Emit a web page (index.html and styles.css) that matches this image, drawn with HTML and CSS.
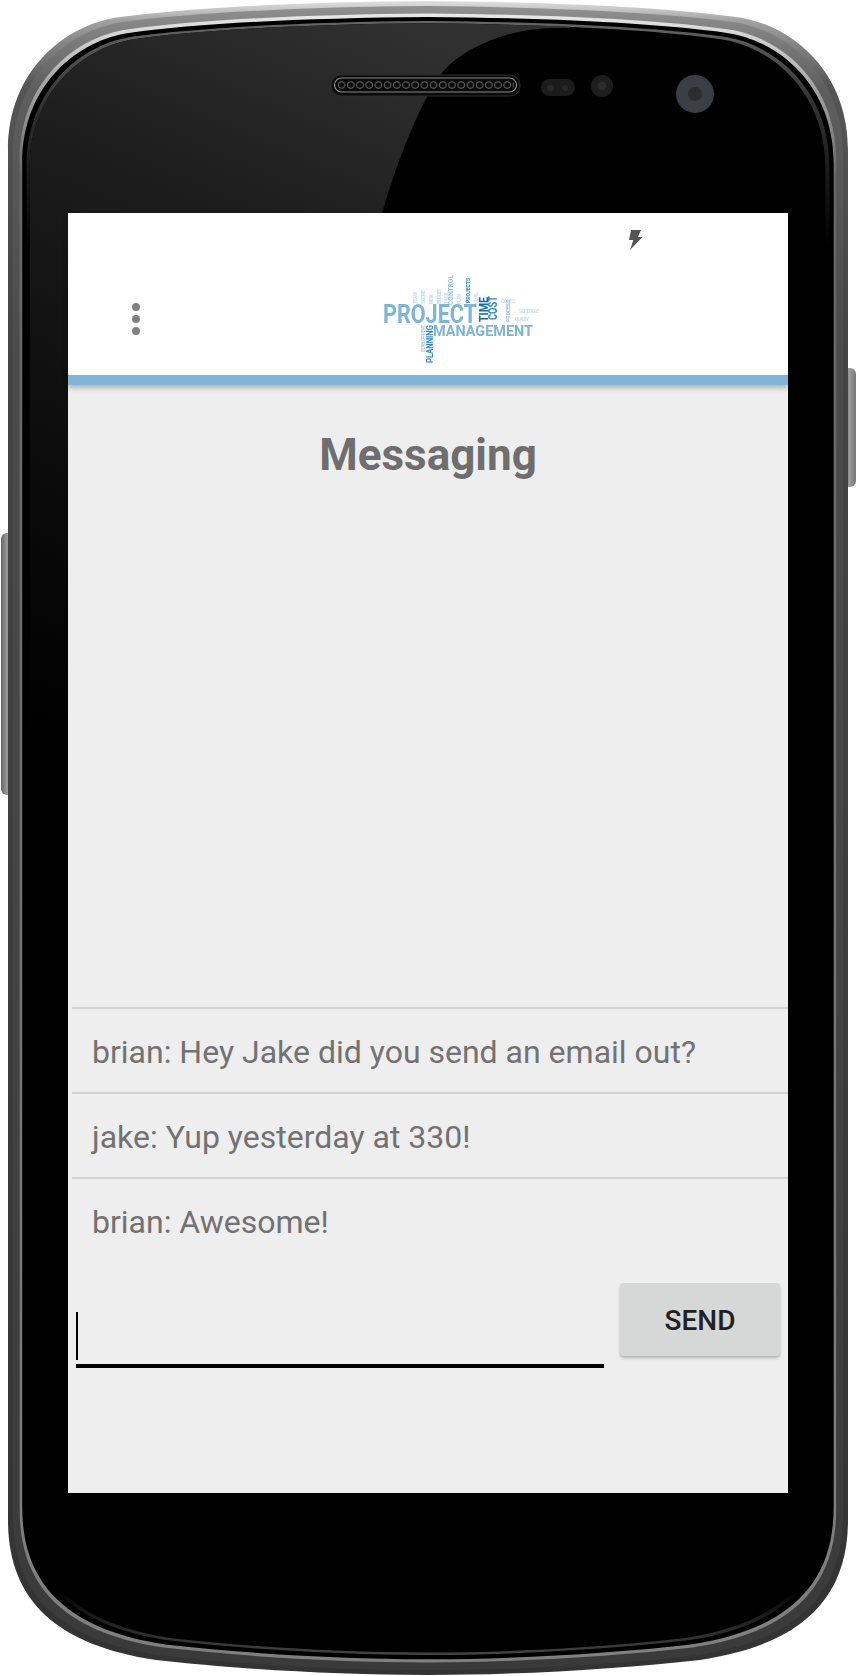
FILE: index.html
```html
<!DOCTYPE html>
<html lang="en">

<head>
    <meta charset="UTF-8">
    <meta name="viewport" content="width=device-width, initial-scale=1.0">
    <title>Messaging</title>
    <link rel="stylesheet" href="styles.css">
</head>

<body>
    <div class="phone">
        <!-- device frame, drawn behind the screen -->
        <svg class="frame" width="856" height="1676" viewBox="0 0 856 1676">
            <defs>
                <path id="body" d="M428 1C560 2 670 8 736 17C790 24 848 70 848 150V1520C848 1600 800 1645 700 1660C620 1669 520 1675 428 1675C336 1675 236 1669 156 1660C56 1645 8 1600 8 1520V150C8 70 66 24 120 17C186 8 296 2 428 1Z"/>
                <linearGradient id="rimOuter" x1="0" y1="0" x2="0" y2="1">
                    <stop offset="0" stop-color="#e0e0e0"/>
                    <stop offset="0.012" stop-color="#a0a0a0"/>
                    <stop offset="0.05" stop-color="#555"/>
                    <stop offset="0.2" stop-color="#454545"/>
                    <stop offset="1" stop-color="#333"/>
                </linearGradient>
                <linearGradient id="rimMid" x1="0" y1="0" x2="0" y2="1">
                    <stop offset="0" stop-color="#909090"/>
                    <stop offset="0.05" stop-color="#5e5e5e"/>
                    <stop offset="0.2" stop-color="#4c4c4c"/>
                    <stop offset="1" stop-color="#3a3a3a"/>
                </linearGradient>
                <linearGradient id="rimLight" x1="0" y1="0" x2="0" y2="1">
                    <stop offset="0" stop-color="#e8e8e8"/>
                    <stop offset="0.04" stop-color="#aaa"/>
                    <stop offset="0.1" stop-color="#666"/>
                    <stop offset="1" stop-color="#808080"/>
                </linearGradient>
                <linearGradient id="rimLine" x1="0" y1="0" x2="0" y2="1">
                    <stop offset="0" stop-color="#666"/>
                    <stop offset="0.05" stop-color="#333"/>
                    <stop offset="0.14" stop-color="#000"/>
                    <stop offset="0.96" stop-color="#000"/>
                    <stop offset="1" stop-color="#444"/>
                </linearGradient>
                <linearGradient id="glass" gradientUnits="userSpaceOnUse" x1="380" y1="20" x2="60" y2="760">
                    <stop offset="0" stop-color="#303030"/>
                    <stop offset="0.3" stop-color="#1c1c1c"/>
                    <stop offset="0.7" stop-color="#0a0a0a"/>
                    <stop offset="1" stop-color="#000"/>
                </linearGradient>
                <linearGradient id="keyLeft" x1="0" y1="0" x2="1" y2="0">
                    <stop offset="0" stop-color="#666"/>
                    <stop offset="0.5" stop-color="#9a9a9a"/>
                    <stop offset="1" stop-color="#777"/>
                </linearGradient>
                <pattern id="holes" x="337" y="80" width="9.2" height="10" patternUnits="userSpaceOnUse">
                    <circle cx="4.6" cy="5" r="3.300" fill="#0c0c0c" stroke="#666" stroke-width="1"/>
                </pattern>
                <clipPath id="inner">
                    <use href="#body" transform="translate(22.2 22.4) scale(.9472 .9732)"/>
                </clipPath>
            </defs>

            <rect class="key" x="1" y="533" width="12" height="262" rx="6" fill="url(#keyLeft)"/>
            <rect class="key" x="843" y="368" width="13" height="119" rx="6" fill="url(#keyLeft)"/>

            <use href="#body" fill="url(#rimOuter)"/>
            <use href="#body" fill="url(#rimMid)" transform="translate(5.1 5.1) scale(.988 .994)"/>
            <use href="#body" fill="url(#rimLight)" transform="translate(11.9 12.5) scale(.972 .985)"/>
            <use href="#body" fill="#000" transform="translate(14.5 16) scale(.966 .981)"/>
            <use href="#body" fill="url(#rimLine)" transform="translate(19 20) scale(.9556 .9761)"/>
            <use href="#body" fill="#000" transform="translate(22.2 22.4) scale(.9472 .9732)"/>
            <g clip-path="url(#inner)">
                <path fill="url(#glass)" d="M0 0H570V28C530 27 505 32 470 50C450 62 440 72 428 95C412 125 396 165 382 213L68 213V800H0Z"/>
            </g>

            <!-- speaker -->
            <rect x="331" y="75" width="189" height="21" rx="10" fill="#0b0b0b" stroke="#2c2c2c" stroke-width="1"/>
            <rect x="334.500" y="78" width="182" height="14" rx="7" fill="#0a0a0a" stroke="#8a8a8a" stroke-width="1.200"/>
            <rect x="337" y="80" width="177" height="10" fill="url(#holes)"/>

            <!-- sensors and camera -->
            <rect x="541" y="79" width="34" height="17" rx="8.500" fill="#1c1c1c"/>
            <circle cx="550" cy="88" r="3" fill="#2b2b2b"/>
            <circle cx="565" cy="88" r="3" fill="#2b2b2b"/>
            <circle cx="602" cy="86" r="11" fill="#1e1e1e"/>
            <circle cx="602" cy="86" r="4" fill="#2e2e2e"/>
            <circle cx="695" cy="94" r="19" fill="#3b3e44"/>
            <circle cx="695" cy="94" r="7" fill="#2a2c30"/>
        </svg>

        <div class="screen">
            <header class="appbar">
                <div class="status">
                    <svg class="bolt" width="14" height="20" viewBox="0 0 14 20">
                        <path d="M2 0H12L9 7H13.500L1 20L4.300 10H0Z"/>
                    </svg>
                </div>
                <div class="toolbar">
                    <div class="menu"><span></span><span></span><span></span></div>
                    <svg class="logo" width="170" height="100" viewBox="0 0 170 100">
                        <g class="cloud">
                            <text x="44" y="35" class="w5 pale" transform="rotate(-90 44 35)" textLength="12">TEAM</text>
                            <text x="52" y="35" class="w6 pale" transform="rotate(-90 52 35)" textLength="14">SCOPE</text>
                            <text x="60" y="35" class="w6 pale" transform="rotate(-90 60 35)" textLength="10">RISK</text>
                            <text x="68" y="35" class="w6 pale" transform="rotate(-90 68 35)" textLength="16">BUDGET</text>
                            <text x="75" y="35" class="w5 pale" transform="rotate(-90 75 35)" textLength="12">TASK</text>
                            <text x="88" y="35" class="w5 pale" transform="rotate(-90 88 35)" textLength="10">PLAN</text>
                            <text x="105" y="35" class="w5 pale" transform="rotate(-90 105 35)" textLength="12">GOAL</text>
                            <text x="146" y="44" class="w5 pale" textLength="20">SCHEDULE</text>
                            <text x="142" y="52" class="w5 pale" textLength="14">QUALITY</text>
                            <text x="128" y="34" class="w5 pale" textLength="14">COSTS</text>
                        </g>
                        <text x="10" y="54" class="w25 light" textLength="94" lengthAdjust="spacingAndGlyphs">PROJECT</text>
                        <text x="60" y="67" class="w15 light" textLength="100" lengthAdjust="spacingAndGlyphs">MANAGEMENT</text>
                        <text x="115" y="53" class="w12 dark" transform="rotate(-90 115 53)" textLength="25" lengthAdjust="spacingAndGlyphs">TIME</text>
                        <text x="124" y="51" class="w11 mid" transform="rotate(-90 124 51)" textLength="24" lengthAdjust="spacingAndGlyphs">COST</text>
                        <text x="60" y="94" class="w9 mid" transform="rotate(-90 60 94)" textLength="38" lengthAdjust="spacingAndGlyphs">PLANNING</text>
                        <text x="80" y="36" class="w8 pale" transform="rotate(-90 80 36)" textLength="30" lengthAdjust="spacingAndGlyphs">CONTROL</text>
                        <text x="97" y="34" class="w6 mid" transform="rotate(-90 97 34)" textLength="25" lengthAdjust="spacingAndGlyphs">PROJECTS</text>
                        <text x="52" y="83" class="w5 pale" transform="rotate(-90 52 83)" textLength="27" lengthAdjust="spacingAndGlyphs">DEVELOPMENT</text>
                        <text x="137" y="53" class="w6 pale" transform="rotate(-90 137 53)" textLength="22" lengthAdjust="spacingAndGlyphs">PROCESS</text>
                    </svg>
                </div>
            </header>

            <h1 class="title">Messaging</h1>

            <ul class="messages">
                <li>brian: Hey Jake did you send an email out?</li>
                <li>jake: Yup yesterday at 330!</li>
                <li>brian: Awesome!</li>
            </ul>

            <div class="compose">
                <div class="field"><span class="caret"></span></div>
                <button class="send" type="button">SEND</button>
            </div>
        </div>
    </div>
</body>

</html>
```

FILE: styles.css
```css
* {
    margin: 0;
    padding: 0;
    box-sizing: border-box;
}

html,
body {
    width: 856px;
    height: 1676px;
    background-color: #fff;
    overflow: hidden;
}

.phone {
    width: 856px;
    height: 1676px;
    padding: 213px 68px 183px;
    position: relative;
    font-family: Roboto, "Liberation Sans", sans-serif;
}

.frame {
    position: absolute;
    top: 0;
    left: 0;
}

.screen {
    width: 720px;
    height: 1280px;
    position: relative;
    display: flex;
    flex-direction: column;
    background-color: #eee;
}

.appbar {
    height: 172px;
    flex: none;
    background-color: #fff;
    border-bottom: 10px solid #7fb6d8;
    box-shadow: 0 3px 5px rgba(0, 0, 0, 0.25);
}

.status {
    height: 50px;
    padding: 17px 0 0 561px;
}

.bolt {
    display: block;
}

.bolt path {
    fill: #555;
}

.toolbar {
    display: flex;
    align-items: center;
    height: 112px;
    padding-left: 64px;
}

.menu {
    display: flex;
    flex-direction: column;
    gap: 4px;
    width: 8px;
}

.menu span {
    width: 8px;
    height: 8px;
    border-radius: 50%;
    background-color: #808080;
}

.logo {
    display: block;
    margin-left: 233px;
    overflow: visible;
    filter: blur(0.3px);
}

.logo text {
    font-family: Roboto, "Liberation Sans", sans-serif;
    font-weight: 700;
}

.cloud {
    opacity: 0.55;
}

.w25 { font-size: 25px; }
.w15 { font-size: 15.500px; font-weight: 500; }
.w12 { font-size: 13px; }
.w11 { font-size: 12px; }
.w9 { font-size: 9px; }
.w8 { font-size: 8px; font-weight: 400; }
.w6 { font-size: 6px; }
.w5 { font-size: 5px; }

.light { fill: #7db5d8; }
.pale { fill: #9cc5df; }
.mid { fill: #2f86c0; }
.dark { fill: #0e6cb0; }

.title {
    margin-top: 40px;
    height: 60px;
    line-height: 60px;
    font-size: 44px;
    font-weight: 700;
    color: #6e6e6e;
    text-align: center;
}

.messages {
    list-style: none;
    margin-top: 522px;
    margin-left: 4px;
}

.messages li {
    height: 85px;
    padding: 2px 0 0 20px;
    border-top: 2px solid #d2d2d2;
    line-height: 83px;
    font-size: 32px;
    color: #727272;
}

.compose {
    display: flex;
    align-items: flex-start;
    margin-top: 21px;
    padding: 0 8px;
}

.field {
    width: 528px;
    height: 85px;
    padding-top: 29px;
    border-bottom: 4px solid #000;
}

.caret {
    display: block;
    width: 2px;
    height: 48px;
    background-color: #000;
}

.send {
    width: 160px;
    height: 73px;
    margin-left: 16px;
    padding-top: 2px;
    border: 0;
    border-radius: 4px;
    background-color: #d6d7d7;
    box-shadow: 0 2px 3px rgba(0, 0, 0, 0.25);
    font-family: Roboto, "Liberation Sans", sans-serif;
    font-size: 28px;
    font-weight: 500;
    color: #212121;
}
```
